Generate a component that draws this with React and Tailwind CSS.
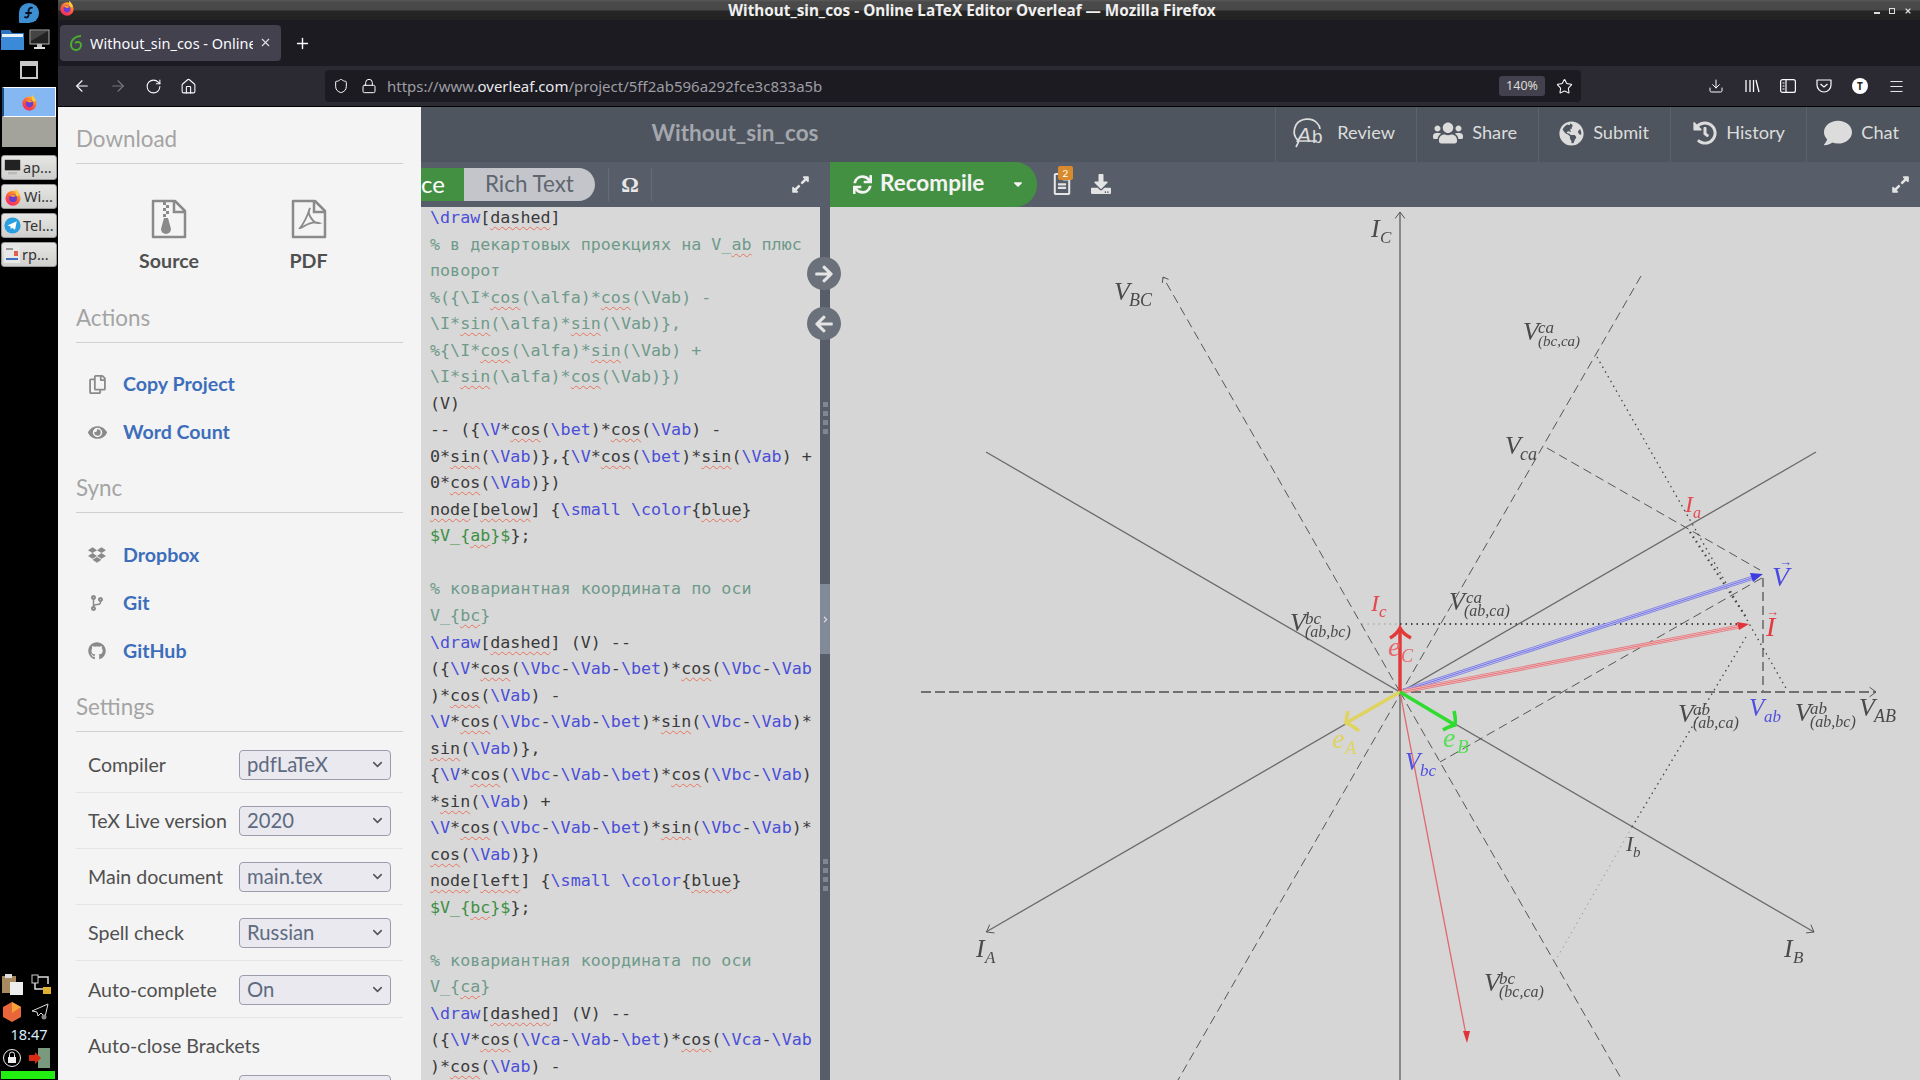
import React from "react";
import { FaUsers, FaGlobeAmericas, FaHistory, FaComment, FaExpandAlt, FaSync, FaDownload, FaRegFileAlt, FaRegCopy, FaEye, FaDropbox, FaCodeBranch, FaGithub, FaArrowRight, FaArrowLeft, FaCaretDown, FaChevronRight } from "react-icons/fa";
import { ArrowLeft, ArrowRight, RotateCw, Home, Shield, Lock, Star, Download, Menu, ChevronDown, X, Plus } from "lucide-react";

const FF = ({ s = 20 }) => (
  <svg width={s} height={s} viewBox="0 0 24 24">
    <defs>
      <linearGradient id="ffg" x1="0.8" y1="0" x2="0.2" y2="1">
        <stop offset="0" stopColor="#ffbd2e" />
        <stop offset="0.5" stopColor="#ff5a36" />
        <stop offset="1" stopColor="#f0246e" />
      </linearGradient>
    </defs>
    <circle cx="12" cy="13.5" r="10" fill="url(#ffg)" />
    <path d="M15 1c3 2 5 5 6 9l-5 1c0-3-1-6-1-10z" fill="#ffc93a" />
    <circle cx="12" cy="13.5" r="5.2" fill="#6a3fd0" />
    <path d="M7 10c3-2 7-2 9 1l-4 1z" fill="#ff9a2e" />
  </svg>
);

const Taskbar = () => (
  <div className="w-[58px] h-full bg-black flex flex-col shrink-0 relative">
    <div className="h-[27px] flex items-start justify-center pt-[2px]">
      <svg width="22" height="22" viewBox="0 0 24 24">
        <path d="M12 1a11 11 0 0 1 0 22H2.500A1.500 1.500 0 0 1 1 21.500V12A11 11 0 0 1 12 1z" fill="#3c8fd0" />
        <path d="M16 6.500c-2.500-1-4.500.5-4.500 3v5c0 2.500-3 3-4.500 1.500M8 12h7" stroke="#0b1020" strokeWidth="2" fill="none" />
      </svg>
    </div>
    <div className="flex h-[25px] items-center pl-px gap-[5px]">
      <svg width="23" height="21" viewBox="0 0 23 21">
        <path d="M0 1h9l2 3h12v17H0z" fill="#2a74c0" />
        <rect x="1" y="5" width="21" height="3" fill="#e8f0f8" />
        <rect x="0" y="8" width="23" height="13" fill="#3a8ad8" />
      </svg>
      <svg width="21" height="21" viewBox="0 0 21 21">
        <rect x="1" y="1" width="19" height="14" fill="#222" stroke="#b0b0b0" />
        <path d="M2 2h17L2 12z" fill="#444" />
        <rect x="8" y="15" width="5" height="3" fill="#bbb" />
        <rect x="5" y="18" width="11" height="2" fill="#ddd" />
      </svg>
    </div>
    <div className="h-[35px] flex items-center justify-center">
      <div className="w-[18px] h-[18px] border-2 border-[#c8c8c8] border-t-[5px] bg-black" />
    </div>
    <div className="ml-[2px] w-[54px] h-[30px] bg-[#85b8f3] border border-white border-l-[2px] border-l-[#1c4c80] flex items-center justify-center">
      <FF s={17} />
    </div>
    <div className="ml-[2px] w-[54px] h-[30px] bg-[#a3a39b]" />
    <div className="flex flex-col gap-[4px] mt-[8px] ml-px">
      {[
        ["ap...", <svg key="a" width="17" height="17" viewBox="0 0 21 21"><rect x="1" y="1" width="19" height="13" fill="#222" /><rect x="5" y="16" width="11" height="3" fill="#bbb" /></svg>],
        ["Wi...", <FF key="b" s={18} />],
        ["Tel...", <svg key="c" width="17" height="17" viewBox="0 0 20 20"><circle cx="10" cy="10" r="9.500" fill="#2a9fe0" /><path d="M4 10l11-5-2 10-3.500-2.500-1.500 2-.5-3.500z" fill="#fff" /></svg>],
        ["rp...", <svg key="d" width="16" height="17" viewBox="0 0 16 17"><rect width="16" height="17" fill="#e8e8e8" /><rect x="2" y="2" width="7" height="2" fill="#999" /><rect x="10" y="5" width="4" height="5" fill="#e06050" /><rect x="2" y="12" width="12" height="2" fill="#4070c0" /></svg>],
      ].map(([t, i]) => (
        <div key={t} className="w-[56px] h-[25px] rounded-[3px] border border-[#999] bg-gradient-to-b from-[#e6e6e4] to-[#cfcfcd] flex items-center gap-[2px] pl-[2px] overflow-hidden">
          {i}
          <span className="text-[14.5px] text-[#333] font-['Noto_Sans',sans-serif] whitespace-nowrap">{t}</span>
        </div>
      ))}
    </div>
    <div className="mt-auto flex flex-col">
      <div className="flex justify-between px-[1px] h-[24px]">
        <svg width="23" height="22" viewBox="0 0 23 22"><rect x="1" y="2" width="14" height="17" fill="#a88a60" /><rect x="4" y="0" width="7" height="4" fill="#ddd" /><rect x="9" y="8" width="13" height="13" fill="#eee" /></svg>
        <svg width="22" height="22" viewBox="0 0 22 22" className="mr-[5px]"><rect x="2" y="1" width="6" height="8" fill="none" stroke="#ccc" /><path d="M5 9v6h8M8 3h10v7" fill="none" stroke="#ddd" strokeWidth="1.500" /><rect x="13" y="13" width="8" height="7" fill="#e0b030" /></svg>
      </div>
      <div className="flex justify-between px-[3px] h-[27px] items-center">
        <svg width="18" height="20" viewBox="0 0 18 20"><path d="M9 0l9 5v10l-9 5-9-5V5z" fill="#e8663a" /><path d="M9 0l9 5-9 6z" fill="#f5a23a" /></svg>
        <svg width="18" height="18" viewBox="0 0 18 18" className="mr-[6px]"><path d="M1 8L17 1l-3 13-4-4-3 3-1-4z" fill="none" stroke="#ddd" /><circle cx="13" cy="14" r="2.500" fill="#888" /></svg>
      </div>
      <div className="text-[14.5px] leading-[18px] h-[20px] text-center text-[#d8ecff] font-['Noto_Sans',sans-serif]">18:47</div>
      <div className="flex h-[26px] items-center justify-between px-[3px]">
        <svg width="18" height="18" viewBox="0 0 18 18"><circle cx="9" cy="9" r="8.500" fill="none" stroke="#eee" /><rect x="5" y="8" width="8" height="6" fill="#eee" /><path d="M6.500 8V5.500a2.500 2.500 0 0 1 5 0V8" fill="none" stroke="#eee" /></svg>
        <svg width="22" height="20" viewBox="0 0 22 20" className="mr-[4px]"><rect x="9" y="0" width="12" height="20" fill="#7a9a80" /><path d="M0 7h6V4l6 6-6 6v-3H0z" fill="#d82a10" /></svg>
      </div>
      <div className="h-[8px] mx-px mb-px w-[54px] bg-[#22ee11]" />
    </div>
  </div>
);

const Chrome = () => (
  <div className="shrink-0 font-['Noto_Sans',sans-serif]">
    <div className="h-[20px] relative bg-[linear-gradient(#5a5a5a_0,#4a4a4a_2px,#484848_10px,#262626_11px,#222_20px)] flex items-center justify-center">
      <div className="absolute left-[1px] top-[0px]"><FF s={16} /></div>
      <span className="text-[15.3px] font-bold text-[#f0f0f0] leading-[18px] -ml-[34px]">Without_sin_cos - Online LaTeX Editor Overleaf — Mozilla Firefox</span>
      <div className="absolute right-[8px] top-[7px] flex gap-[9px] items-center text-white">
        <div className="w-[6px] h-[2px] bg-[#ddd] mt-[4px]" />
        <div className="w-[6px] h-[6px] border border-[#ddd]" />
        <X size={8} strokeWidth={3.500} color="#ddd" />
      </div>
    </div>
    <div className="h-[46px] bg-[#1c1b22] flex items-center pl-[2px]">
      <div className="w-[221px] h-[36px] bg-[#42414d] rounded-[4px] flex items-center pl-[9px] relative">
        <svg width="14" height="16" viewBox="0 0 14 16"><path d="M12 1C6 1 2 5 2 10a5 5 0 0 0 10 0c0-3-3-4-6-2" fill="none" stroke="#4caf30" strokeWidth="2" /></svg>
        <span className="ml-[7px] mt-[1px] text-[14.5px] text-[#fbfbfe] whitespace-nowrap w-[163px] overflow-hidden">Without_sin_cos - Online</span>
        <X size={13} color="#e0e0e6" className="absolute right-[9px] top-[11px]" />
      </div>
      <Plus size={17} color="#fbfbfe" className="ml-[13px] mt-[1px]" />
    </div>
    <div className="h-[41px] bg-[#2b2a33] border-b border-black flex items-center relative">
      <div className="flex items-center w-[267px] pl-[15px] gap-[18px] text-[#fbfbfe]">
        <ArrowLeft size={18} strokeWidth={1.500} />
        <ArrowRight size={18} strokeWidth={1.500} className="text-[#777]" />
        <RotateCw size={17} strokeWidth={1.500} />
        <Home size={17} strokeWidth={1.500} />
      </div>
      <div className="w-[1256px] h-[32px] bg-[#1c1b22] rounded-[4px] flex items-center relative">
        <Shield size={16} strokeWidth={1.500} color="#fbfbfe" className="ml-[8px]" />
        <Lock size={16} strokeWidth={1.500} color="#fbfbfe" className="ml-[12px]" />
        <span className="ml-[10px] text-[15px] text-[#9d9da3] whitespace-nowrap">https://www.<span className="text-[#e8e8ec]">overleaf.com</span>/project/5ff2ab596a292fce3c833a5b</span>
        <div className="ml-auto w-[46px] h-[20px] rounded-[3px] bg-[#42414d] text-[12.5px] text-[#dcdcd4] flex items-center justify-center mr-[11px]">140%</div>
        <Star size={17} strokeWidth={1.500} color="#fbfbfe" className="mr-[8px]" />
      </div>
      <div className="flex items-center ml-[127px] gap-[20px] text-[#fbfbfe]">
        <Download size={16} strokeWidth={1.500} />
        <svg width="16" height="16" viewBox="0 0 16 16" fill="none" stroke="currentColor" strokeWidth="1.300"><path d="M2 2v12M6 2v12M9.500 2v12M12 2l3 12" /></svg>
        <svg width="16" height="14" viewBox="0 0 16 14" fill="none" stroke="currentColor" strokeWidth="1.200"><rect x=".6" y=".6" width="14.800" height="12.800" rx="2" /><path d="M6 1v12M2.500 4h2M2.500 7h2M2.500 10h2" /></svg>
        <svg width="16" height="14" viewBox="0 0 16 14" fill="none" stroke="currentColor" strokeWidth="1.200"><path d="M1 1h14v5a7 7 0 0 1-14 0z" strokeLinejoin="round" /><path d="M4.500 5l3.500 3 3.500-3" /></svg>
        <div className="w-[16px] h-[16px] rounded-full bg-white text-[#222] text-[10px] font-bold flex items-center justify-center">T</div>
        <Menu size={17} strokeWidth={1.300} />
      </div>
    </div>
  </div>
);

const Heading = ({ children }) => (
  <div className="h-[57px] border-b border-[#d0d0d0] flex items-end pb-[10px] text-[22.4px] leading-[28px] text-[#a4a4a4]">{children}</div>
);

const LinkRow = ({ icon, children }) => (
  <div className="h-[48px] flex items-center pl-[11px] gap-[16px] text-[#3d6ebb] font-bold text-[19.6px]">
    <span className="w-[20px] flex justify-center text-[#8a8a8a]">{icon}</span>
    {children}
  </div>
);

const Sel = ({ v }) => (
  <div className="w-[152px] h-[30px] bg-[#e9e9ef] border border-[#9c9cac] rounded-[4px] flex items-center justify-between pl-[7px] pr-[5px] text-[20.3px] text-[#5f6b80]">
    {v}
    <ChevronDown size={15} strokeWidth={2.500} color="#555" />
  </div>
);

const SetRow = ({ l, v, first }) => (
  <div className={first ? "h-[61px] pt-[5px] border-b border-[#e4e4e4] flex items-center justify-between pl-[12px] pr-[12px] text-[19.6px] text-[#505050]" : "h-[56px] border-b border-[#e4e4e4] flex items-center justify-between pl-[12px] pr-[12px] text-[19.6px] text-[#505050]"}>
    <span>{l}</span>
    <Sel v={v} />
  </div>
);

const FileIcon = ({ zip }) => (
  <svg width="36" height="40" viewBox="0 0 36 40" fill="none" stroke="#8a8a8a" strokeWidth="2.500">
    <path d="M2 2h22l10 10v26H2z" strokeLinejoin="round" />
    <path d="M23 2v11h11" />
    {zip ? (
      <g fill="#8a8a8a" stroke="none">
        <rect x="12" y="3" width="3" height="3" /><rect x="15" y="6" width="3" height="3" /><rect x="12" y="9" width="3" height="3" /><rect x="15" y="12" width="3" height="3" /><rect x="12" y="15" width="3" height="3" />
        <path d="M13 19h4l3 11a5 5 0 0 1-10 0z" />
      </g>
    ) : (
      <path d="M19 9c-2 6-5 14-10 20 3 0 10-8 19-5-5 1-13-9-9-15z" strokeWidth="1.800" />
    )}
  </svg>
);

const LeftMenu = () => (
  <div className="w-[363px] h-full bg-[#f4f4f4] px-[18px] shrink-0 overflow-hidden font-['Lato',sans-serif]">
    <Heading>Download</Heading>
    <div className="h-[122px] flex">
      <div className="w-[186px] flex flex-col items-center pt-[35px]">
        <FileIcon zip />
        <span className="mt-[10px] text-[19.6px] font-bold text-[#505050] leading-[24px]">Source</span>
      </div>
      <div className="w-[93px] flex flex-col items-center pt-[35px]">
        <FileIcon />
        <span className="mt-[10px] text-[19.6px] font-bold text-[#505050] leading-[24px]">PDF</span>
      </div>
    </div>
    <Heading>Actions</Heading>
    <div className="pt-[17px]">
      <LinkRow icon={<FaRegCopy size={19} />}>Copy Project</LinkRow>
      <LinkRow icon={<FaEye size={19} />}>Word Count</LinkRow>
    </div>
    <Heading>Sync</Heading>
    <div className="pt-[18px]">
      <LinkRow icon={<FaDropbox size={18} />}>Dropbox</LinkRow>
      <LinkRow icon={<FaCodeBranch size={16} />}>Git</LinkRow>
      <LinkRow icon={<FaGithub size={18} />}>GitHub</LinkRow>
    </div>
    <Heading>Settings</Heading>
    <SetRow first l="Compiler" v="pdfLaTeX" />
    <SetRow l="TeX Live version" v="2020" />
    <SetRow l="Main document" v="main.tex" />
    <SetRow l="Spell check" v="Russian" />
    <div className="h-[57px] border-b border-[#e4e4e4] flex items-center justify-between pl-[12px] pr-[12px] pt-[1px] text-[19.6px] text-[#505050]">
      <span>Auto-complete</span>
      <Sel v="On" />
    </div>
    <div className="h-[56px] flex items-center pl-[12px] text-[19.6px] text-[#505050]">Auto-close Brackets</div>
    <div className="flex justify-end pr-[12px] mt-[1px]"><Sel v="On" /></div>
  </div>
);

const TopItem = ({ icon, label, w }) => (
  <div className="h-full flex items-center justify-end pr-[21px] pb-[3px] gap-[9px] border-l border-[#5c626c] text-[18.2px] text-[#dcdcdc]" style={{ width: w }}>
    {icon}
    <span>{label}</span>
  </div>
);

const ReviewIcon = () => (
  <svg width="37" height="34" viewBox="0 0 37 34" fill="none" stroke="#dcdcdc" strokeWidth="1.700">
    <path d="M5 31l3-6C3 21 2 15 5 9c4-7 16-8 21-2 2 2 3 4 3 6M8 25h18" />
    <text x="6" y="26" fontSize="21" fontStyle="italic" fontFamily="Liberation Sans" fill="#dcdcdc" stroke="none">A</text>
    <text x="21" y="27" fontSize="19" fontFamily="Liberation Sans" fill="#dcdcdc" stroke="none">b</text>
  </svg>
);

const TopBar = () => (
  <div className="h-[55px] bg-[#4f555e] flex shrink-0 font-['Lato',sans-serif] relative">
    <div className="w-[628px] flex items-center justify-center text-[22.5px] font-bold text-[#a4a8ae] leading-none">
      <span className="pb-[2px]">Without_sin_cos</span>
    </div>
    <div className="ml-auto flex h-full">
      <TopItem w={141} icon={<ReviewIcon />} label="Review" />
      <TopItem w={122} icon={<FaUsers size={30} />} label="Share" />
      <TopItem w={132} icon={<FaGlobeAmericas size={25} />} label="Submit" />
      <TopItem w={136} icon={<FaHistory size={24} />} label="History" />
      <TopItem w={114} icon={<FaComment size={28} />} label="Chat" />
    </div>
  </div>
);

const WORDS = /(\$[^$]*\$|\\[A-Za-z]+|(?<![A-Za-z\\])(?:cos|sin|dashed|ab|bc|ca|node|below|left|blue)(?![A-Za-z]))/g;
const Wavy = ({ children }) => (
  <span className="underline decoration-wavy decoration-[#e8735c] decoration-1 underline-offset-[3px]">{children}</span>
);

const renderLine = (text, mode) => {
  const parts = text.split(WORDS);
  return parts.map((p, i) => {
    if (i % 2 === 0) return p;
    if (p[0] === "$") return <span key={i} className="text-[#3f8f46]">{"$"}{renderLine(p.slice(1, -1), "m")}{"$"}</span>;
    if (p[0] === "\\") return mode === "c" ? p : <span key={i} className="text-[#4a4ed8]">{p}</span>;
    return <Wavy key={i}>{p}</Wavy>;
  });
};

const LINES = [
  ["", "\\draw[dashed]"],
  ["c", "% в декартовых проекциях на V_ab плюс"],
  ["c", "поворот"],
  ["c", "%({\\I*cos(\\alfa)*cos(\\Vab) -"],
  ["c", "\\I*sin(\\alfa)*sin(\\Vab)},"],
  ["c", "%{\\I*cos(\\alfa)*sin(\\Vab) +"],
  ["c", "\\I*sin(\\alfa)*cos(\\Vab)})"],
  ["", "(V)"],
  ["", "-- ({\\V*cos(\\bet)*cos(\\Vab) -"],
  ["", "0*sin(\\Vab)},{\\V*cos(\\bet)*sin(\\Vab) +"],
  ["", "0*cos(\\Vab)})"],
  ["", "node[below] {\\small \\color{blue}"],
  ["", "$V_{ab}$};"],
  ["", " "],
  ["c", "% ковариантная координата по оси"],
  ["c", "V_{bc}"],
  ["", "\\draw[dashed] (V) --"],
  ["", "({\\V*cos(\\Vbc-\\Vab-\\bet)*cos(\\Vbc-\\Vab"],
  ["", ")*cos(\\Vab) -"],
  ["", "\\V*cos(\\Vbc-\\Vab-\\bet)*sin(\\Vbc-\\Vab)*"],
  ["", "sin(\\Vab)},"],
  ["", "{\\V*cos(\\Vbc-\\Vab-\\bet)*cos(\\Vbc-\\Vab)"],
  ["", "*sin(\\Vab) +"],
  ["", "\\V*cos(\\Vbc-\\Vab-\\bet)*sin(\\Vbc-\\Vab)*"],
  ["", "cos(\\Vab)})"],
  ["", "node[left] {\\small \\color{blue}"],
  ["", "$V_{bc}$};"],
  ["", " "],
  ["c", "% ковариантная координата по оси"],
  ["c", "V_{ca}"],
  ["", "\\draw[dashed] (V) --"],
  ["", "({\\V*cos(\\Vca-\\Vab-\\bet)*cos(\\Vca-\\Vab"],
  ["", ")*cos(\\Vab) -"],
];

const Editor = () => (
  <div className="w-[399px] h-full bg-[#d8d8d8] overflow-hidden pl-[9px] font-['DejaVu_Sans_Mono',monospace] text-[16.7px] leading-[26.54px] text-[#3a3a3a]">
    <div className="-mt-[3px]">
      {LINES.map(([m, t], i) => (
        <div key={i} className={m === "c" ? "h-[26.54px] whitespace-pre text-[#6f9a8a]" : "h-[26.54px] whitespace-pre"}>
          {renderLine(t, m)}
        </div>
      ))}
    </div>
  </div>
);

const Dots = () => (
  <div className="flex flex-col gap-[4px]">
    {[0, 1, 2, 3].map((i) => <div key={i} className="w-[5px] h-[5px] bg-[#7f8694]" />)}
  </div>
);

const Splitter = () => (
  <div className="w-[10px] h-full bg-[#575e69] relative flex flex-col items-center">
    <div className="h-[195px]" />
    <Dots />
    <div className="h-[150px]" />
    <div className="w-full h-[70px] bg-[#838a97] flex items-center justify-center text-[#dde]"><FaChevronRight size={7} /></div>
    <div className="h-[205px]" />
    <Dots />
    <div className="absolute -left-[13px] top-[50px] w-[34px] h-[33px] rounded-full bg-[#6b717b] flex items-center justify-center text-[#e4e4e4]"><FaArrowRight size={20} /></div>
    <div className="absolute -left-[13px] top-[100px] w-[34px] h-[33px] rounded-full bg-[#6b717b] flex items-center justify-center text-[#e4e4e4]"><FaArrowLeft size={20} /></div>
  </div>
);

const M = ({ x, y, b, sub, sup, c = "#4a4a4a", fs = 26, ss = 17, ssub, supdx = 0, subdx = 0 }) => (
  <g fill={c} fontFamily="'Liberation Serif', serif" fontStyle="italic">
    <text x={x} y={y} fontSize={fs}>{b}</text>
    {sup && <text x={x + 15 + supdx} y={y - 7} fontSize={ss}>{sup}</text>}
    {sub && <text x={x + 15 + subdx} y={y + 6} fontSize={ssub || ss}>{sub}</text>}
  </g>
);

const arrow = (x, y, a, l = 8, col = "#555", w = 1) => {
  const t = (a * Math.PI) / 180;
  const p = (d) => `${x + l * Math.cos(t + d)},${y + l * Math.sin(t + d)}`;
  return <polyline points={`${p(2.5)} ${x},${y} ${p(-2.5)}`} fill="none" stroke={col} strokeWidth={w} />;
};

const Diagram = () => (
  <svg viewBox="830 207 1090 873" width="1090" height="873" className="block blur-[0.4px]">
    <g fill="none" stroke="#6a6a6a" strokeWidth="1.300">
      <line x1="1400" y1="212" x2="1400" y2="1080" stroke="#808080" strokeWidth="1.800" />
      <line x1="1816" y1="452" x2="986" y2="932" />
      <line x1="986" y1="452" x2="1814" y2="932" />
    </g>
    {arrow(1400, 212, -90)}
    {arrow(986.5, 932, 150)}
    {arrow(1814, 932, 30)}
    <g fill="none" stroke="#555" strokeWidth="1" strokeDasharray="9 5">
      <line x1="1400" y1="692" x2="1163" y2="277" />
      <line x1="1400" y1="692" x2="1622" y2="1080" />
      <line x1="1641" y1="276" x2="1178" y2="1080" />
      <line x1="1547" y1="448" x2="1760" y2="570" />
      <line x1="1762" y1="578" x2="1440" y2="762" />
      <line x1="1763" y1="578" x2="1763" y2="692" strokeWidth="1.300" />
    </g>
    <line x1="921" y1="692" x2="1876" y2="692" stroke="#707070" strokeWidth="1.800" strokeDasharray="10 4" />
    {arrow(1876, 692, 0)}
    {arrow(1163, 277, -120, 6)}
    <g fill="none" stroke="#444" strokeWidth="1.300" strokeDasharray="1.500 4">
      <line x1="1400" y1="624" x2="1746" y2="624" strokeWidth="1.800" />
      <line x1="1597" y1="357" x2="1787" y2="690" />
      <line x1="1690" y1="532" x2="1746" y2="617" strokeWidth="2.200" />
      <line x1="1746" y1="637" x2="1632" y2="827" />
    </g>
    <g fill="none" stroke="#999" strokeWidth="1" strokeDasharray="1.500 4">
      <line x1="1362" y1="624" x2="1400" y2="624" />
      <line x1="1632" y1="827" x2="1557" y2="958" />
    </g>
    <line x1="1400" y1="692" x2="1467" y2="1040" stroke="#e0686e" strokeWidth="1.300" />
    <polygon points="1467,1043 1463,1031 1470,1031" fill="#e2323a" />

    <line x1="1400" y1="692" x2="1755" y2="577" stroke="#7d7de4" strokeWidth="4.200" />
    <line x1="1400" y1="692" x2="1755" y2="577" stroke="#c4c4ee" strokeWidth="2.600" />
    <line x1="1400" y1="692" x2="1755" y2="577" stroke="#6a6ae0" strokeWidth="0.900" />
    <polygon points="1763,574 1750,573 1753,582" fill="#3d3de0" />
    <line x1="1400" y1="692" x2="1742" y2="626" stroke="#e47a80" strokeWidth="4.200" />
    <line x1="1400" y1="692" x2="1742" y2="626" stroke="#eec4c4" strokeWidth="2.600" />
    <line x1="1400" y1="692" x2="1742" y2="626" stroke="#e06a70" strokeWidth="0.900" />
    <polygon points="1749,624 1737,622 1739,630" fill="#e2323a" />

    <g fill="none" strokeWidth="3.500">
      <line x1="1400" y1="692" x2="1400" y2="630" stroke="#e23a3a" />
      <path d="M1390 638Q1397 634 1400 628Q1403 634 1411 638" stroke="#e23a3a" />
      <line x1="1400" y1="692" x2="1346" y2="723" stroke="#e0d460" />
      <path d="M1348 711Q1346 720 1346 723Q1352 725 1359 731" stroke="#e0d460" />
      <line x1="1400" y1="692" x2="1455" y2="725" stroke="#2fdc2f" />
      <path d="M1454 711Q1456 719 1455 725Q1450 726 1443 730" stroke="#2fdc2f" />
    </g>

    <M x={1371} y={237} b="I" sub="C" fs={26} ss={17} subdx={-6} />
    <M x={1114} y={300} b="V" sub="BC" fs={26} ss={18} />
    <M x={1523} y={340} b="V" sup="ca" sub="(bc,ca)" ssub={15} />
    <M x={1505} y={454} b="V" sub="ca" fs={26} ss={18} />
    <M x={1685} y={512} b="I" sub="a" c="#e24a50" fs={24} ss={16} subdx={-7} />
    <M x={1772} y={586} b="V" c="#4a4ae0" fs={28} />
    <text x="1779" y="566" fontSize="13" fill="#4a4ae0" fontFamily="'Liberation Serif', serif">→</text>
    <M x={1766} y={636} b="I" c="#e23a40" fs={28} />
    <text x="1766" y="616" fontSize="13" fill="#e23a40" fontFamily="'Liberation Serif', serif">→</text>
    <M x={1371} y={611} b="I" sub="c" c="#e2484e" fs={24} ss={17} subdx={-7} />
    <M x={1449} y={610} b="V" sup="ca" sub="(ab,ca)" ssub={16} supdx={2} />
    <M x={1290} y={631} b="V" sup="bc" sub="(ab,bc)" ssub={16} />
    <M x={1388} y={656} b="e" sub="C" c="#e8666a" fs={28} ss={18} subdx={-2} />
    <M x={1332} y={748} b="e" sub="A" c="#e0d460" fs={28} ss={18} subdx={-2} />
    <M x={1443} y={747} b="e" sub="B" c="#55e055" fs={28} ss={19} subdx={-1} />
    <M x={1405} y={770} b="V" sub="bc" c="#5050e0" fs={25} ss={17} />
    <M x={1749} y={716} b="V" sub="ab" c="#5050e0" fs={25} ss={17} />
    <M x={1678} y={722} b="V" sup="ab" sub="(ab,ca)" ssub={16} />
    <M x={1795} y={721} b="V" sup="ab" sub="(ab,bc)" ssub={16} />
    <M x={1859} y={716} b="V" sub="AB" fs={26} ss={18} />
    <M x={976} y={957} b="I" sub="A" fs={26} ss={17} subdx={-6} />
    <M x={1784} y={957} b="I" sub="B" fs={26} ss={17} subdx={-6} />
    <M x={1626} y={851} b="I" sub="b" fs={22} ss={15} subdx={-8} />
    <M x={1484} y={991} b="V" sup="bc" sub="(bc,ca)" ssub={16} />
  </svg>
);

const EdToolbar = () => (
  <div className="w-[399px] h-full flex items-center relative">
    <div className="w-[43px] h-[33px] bg-[#449042] text-white text-[24px] flex items-center overflow-hidden pb-[2px]">ce</div>
    <div className="w-[131px] h-[33px] bg-[#c3c5ca] rounded-r-[17px] text-[22.4px] text-[#5f6670] flex items-center pl-[21px] pb-[2px]">Rich Text</div>
    <div className="ml-[13px] w-[44px] h-[33px] border-x border-[#666c77] flex items-center justify-center text-[#e8e8e8] text-[22px] font-bold font-['Liberation_Serif',serif]">Ω</div>
    <div className="ml-auto mr-[10px] text-[#e4e4e4]"><FaExpandAlt size={19} /></div>
  </div>
);

const PdfToolbar = () => (
  <div className="flex-1 h-full flex items-center">
    <div className="w-[207px] h-full bg-[#449042] rounded-r-[22px] flex items-center text-[#f4f4f4] pl-[23px] relative">
      <FaSync size={19} />
      <span className="ml-[8px] text-[22.5px] font-bold pb-[3px]">Recompile</span>
      <FaCaretDown size={14} className="absolute right-[12px] top-[15px]" />
    </div>
    <div className="relative ml-[14px] mb-[2px] text-[#e4e4e4]">
      <FaRegFileAlt size={22} />
      <div className="absolute -top-[7px] left-[7px] w-[15px] h-[14px] bg-[#d98a2c] text-[10px] text-white rounded-[2px] flex items-center justify-center leading-none">2</div>
    </div>
    <div className="ml-[18px] mb-[1px] text-[#e4e4e4]"><FaDownload size={20} /></div>
    <div className="ml-auto mr-[10px] text-[#e4e4e4]"><FaExpandAlt size={19} /></div>
  </div>
);

export default function App() {
  return (
    <div className="w-[1920px] h-[1080px] flex overflow-hidden bg-black">
      <Taskbar />
      <div className="flex-1 flex flex-col min-w-0">
        <Chrome />
        <div className="flex flex-1 min-h-0">
          <LeftMenu />
          <div className="flex-1 flex flex-col min-w-0">
            <TopBar />
            <div className="h-[45px] bg-[#575e69] flex shrink-0 font-['Lato',sans-serif]">
              <EdToolbar />
              <div className="w-[10px]" />
              <PdfToolbar />
            </div>
            <div className="flex flex-1 min-h-0">
              <Editor />
              <Splitter />
              <div className="flex-1 bg-[#d6d6d6] overflow-hidden"><Diagram /></div>
            </div>
          </div>
        </div>
      </div>
    </div>
  );
}
